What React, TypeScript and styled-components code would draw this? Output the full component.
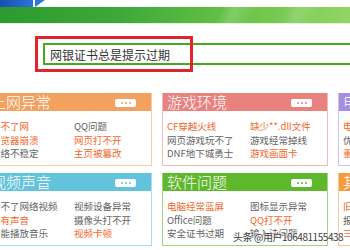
import React from "react";
import styled, { createGlobalStyle } from "styled-components";

const GlobalStyle = createGlobalStyle`
  html, body {
    margin: 0;
    padding: 0;
    background: #ffffff;
    overflow: hidden;
  }
  body {
    font-family: "Noto Sans CJK SC", "Noto Sans", sans-serif;
  }
`;

const Page = styled.div`
  position: relative;
  width: 350px;
  height: 250px;
  overflow: hidden;
  background: #ffffff;
`;

const TopStrip = styled.div`
  height: 7px;
  display: flex;
`;

const GreenBar = styled.div`
  height: 16px;
  background:
    linear-gradient(115deg, transparent 62%, rgba(255, 255, 255, 0.18) 66%, transparent 72%),
    linear-gradient(115deg, transparent 80%, rgba(255, 255, 255, 0.15) 84%, transparent 90%),
    linear-gradient(90deg, #2c9a2e 0%, #3ea93a 35%, #6cc448 70%, #92d564 100%);
  border-bottom: 1px solid #e4efe0;
`;

const SearchArea = styled.div`
  position: relative;
  padding: 19px 0 0 43px;
  height: 49px;
  box-sizing: border-box;
`;

const SearchInput = styled.div`
  width: 400px;
  height: 22px;
  box-sizing: border-box;
  border: 2px solid #48a81e;
  display: flex;
  align-items: center;
  padding-left: 5px;
  font-size: 12px;
  color: #333333;
`;

const RedMark = styled.div`
  position: absolute;
  left: 35px;
  top: 12px;
  width: 158px;
  height: 36px;
  box-sizing: border-box;
  border: 3px solid #e1252b;
`;

const CardGrid = styled.div`
  display: grid;
  grid-template-columns: repeat(3, 166px);
  column-gap: 10px;
  row-gap: 7px;
  margin-left: -14px;
  margin-top: 20px;
`;

const Card = styled.div<{ $color: string; $border: string }>`
  height: 73px;
  box-sizing: border-box;
  border: 1px solid ${(p) => p.$border};
  border-top: none;
  background: #ffffff;
  overflow: hidden;
  --accent: ${(p) => p.$color};
`;

const CardHeader = styled.div`
  height: 18px;
  background: var(--accent);
  margin: 0 -1px;
  display: flex;
  align-items: center;
  justify-content: space-between;
  padding: 0 16px 0 5px;
`;

const CardTitle = styled.span`
  color: #ffffff;
  font-size: 15px;
  font-weight: 300;
  line-height: 18px;
  white-space: nowrap;
`;

const MoreButton = styled.span`
  width: 21px;
  height: 8px;
  border-radius: 2px;
  background: #ffffff;
  display: flex;
  align-items: center;
  justify-content: center;
  gap: 2px;
  margin-top: 1px;
`;

const Dot = styled.i`
  width: 2px;
  height: 2px;
  border-radius: 50%;
  background: var(--accent);
`;

const CardBody = styled.div`
  display: grid;
  grid-template-columns: 83px 1fr;
  padding: 9px 0 0 4px;
`;

const Item = styled.span<{ $hot?: boolean }>`
  font-size: 9.5px;
  line-height: 13.5px;
  color: ${(p) => (p.$hot ? "#f2672a" : "#626262")};
  white-space: nowrap;
  overflow: hidden;
`;

const Watermark = styled.div`
  position: absolute;
  left: 233px;
  top: 229px;
  font-size: 10px;
  letter-spacing: -0.45px;
  color: #3a3a3a;
  white-space: nowrap;
  text-shadow: 0 0 2px #ffffff, 0 0 2px #ffffff, 0 0 1px #ffffff;
`;

type Entry = [string, boolean];

interface CardData {
  title: string;
  color: string;
  border: string;
  items: Entry[];
}

const cards: CardData[] = [
  {
    title: "上网异常",
    color: "#f3a15f",
    border: "#f8ccaa",
    items: [
      ["上不了网", true],
      ["QQ问题", false],
      ["浏览器崩溃", true],
      ["网页打不开", true],
      ["网络不稳定", false],
      ["主页被篡改", true],
    ],
  },
  {
    title: "游戏环境",
    color: "#e9817f",
    border: "#f1b9b8",
    items: [
      ["CF穿越火线", true],
      ["缺少**.dll文件", true],
      ["网页游戏玩不了", false],
      ["游戏经常掉线", false],
      ["DNF地下城勇士", false],
      ["游戏画面卡", true],
    ],
  },
  {
    title: "电脑很卡",
    color: "#a68de0",
    border: "#cfc1ef",
    items: [
      ["电脑很慢", true],
      ["开机慢", false],
      ["优化加速", false],
      ["内存不足", false],
      ["重装系统", true],
      ["清理垃圾", true],
    ],
  },
  {
    title: "视频声音",
    color: "#63c3dd",
    border: "#a9dcec",
    items: [
      ["看不了网络视频", false],
      ["视频设备异常", false],
      ["没有声音", true],
      ["摄像头打不开", false],
      ["不能播放音乐", false],
      ["视频卡顿", true],
    ],
  },
  {
    title: "软件问题",
    color: "#5db82b",
    border: "#9fd57f",
    items: [
      ["电脑经常蓝屏", true],
      ["图标显示异常", false],
      ["Office问题", false],
      ["QQ打不开", true],
      ["安全证书过期", false],
      ["输入法问题", false],
    ],
  },
  {
    title: "其他问题",
    color: "#f39b3f",
    border: "#f8c896",
    items: [
      ["旧电脑升级", true],
      ["打印机", false],
      ["报错提示", false],
      ["驱动安装", false],
      ["三方软件", true],
      ["数据恢复", true],
    ],
  },
];

const TopLogo = () => (
  <svg width="60" height="7" viewBox="0 0 60 7">
    <defs>
      <linearGradient id="lg" x1="0" x2="1" y1="0" y2="0">
        <stop offset="0" stopColor="#1a4fb0" />
        <stop offset="1" stopColor="#2c74d8" />
      </linearGradient>
    </defs>
    <polygon points="0,0 33,0 33,7 0,7" fill="url(#lg)" />
    <polygon points="35,0 45,0 35,7" fill="#2d78dc" />
  </svg>
);

const App = () => (
  <Page>
    <GlobalStyle />
    <TopStrip>
      <TopLogo />
    </TopStrip>
    <GreenBar />
    <SearchArea>
      <SearchInput>网银证书总是提示过期</SearchInput>
      <RedMark />
    </SearchArea>
    <CardGrid>
      {cards.map((c) => (
        <Card key={c.title} $color={c.color} $border={c.border}>
          <CardHeader>
            <CardTitle>{c.title}</CardTitle>
            <MoreButton>
              <Dot />
              <Dot />
              <Dot />
            </MoreButton>
          </CardHeader>
          <CardBody>
            {c.items.map(([text, hot]) => (
              <Item key={text} $hot={hot}>
                {text}
              </Item>
            ))}
          </CardBody>
        </Card>
      ))}
    </CardGrid>
    <Watermark>头条 @用户106481155438</Watermark>
  </Page>
);

export default App;
